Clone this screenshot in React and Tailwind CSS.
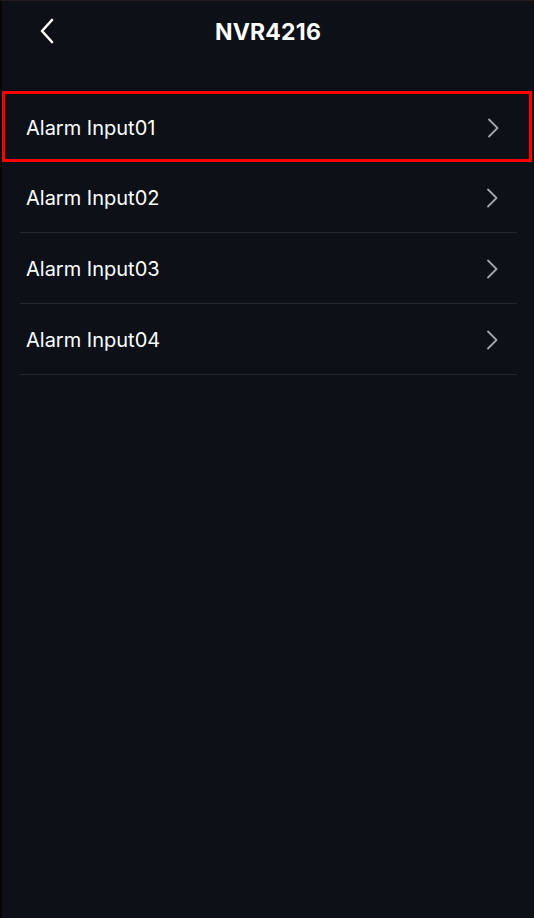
import React from 'react'

const inputs = ['Alarm Input01', 'Alarm Input02', 'Alarm Input03', 'Alarm Input04']

function Chevron() {
  return (
    <svg width="12" height="20" viewBox="0 0 12 20" fill="none" className="mt-[2px] shrink-0">
      <path d="M2 1.5l8.5 8.5-8.5 8.5" stroke="#a3a6ad" strokeWidth="1.8" strokeLinecap="round" strokeLinejoin="round" />
    </svg>
  )
}

function BackIcon() {
  return (
    <svg width="16" height="26" viewBox="0 0 16 26" fill="none">
      <path d="M13 2L3 13l10 11" stroke="#ffffff" strokeWidth="2.6" strokeLinecap="round" strokeLinejoin="round" />
    </svg>
  )
}

export default function App() {
  return (
    <div className="flex h-[918px] w-full border-t border-[#2a171c] bg-[#0d1017] text-white" style={{ fontFamily: 'Inter, "Noto Sans", sans-serif' }}>
      <div className="w-[2px] shrink-0 bg-[#06070a]" />
      <div className="flex flex-1 flex-col">
        <header className="relative flex h-[62px] items-center justify-center">
          <button className="absolute left-[37px] top-[17px]">
            <BackIcon />
          </button>
          <h1 className="text-[23px] font-bold tracking-[0.2px]">NVR4216</h1>
        </header>

        <ul className="mt-[28px]">
          {inputs.map((name, i) =>
            i === 0 ? (
              <li key={name} className="mr-[2px] flex h-[71px] items-center justify-between border-[3px] border-[#f00] pl-[21px] pr-[30px]">
                <span className="mt-[2px] text-[20px]">{name}</span>
                <Chevron />
              </li>
            ) : (
              <li key={name} className="ml-[18px] mr-[17px] flex h-[71px] items-center justify-between border-b border-[#24272e] pl-[6px] pr-[19px]">
                <span className="mt-[2px] text-[20px]">{name}</span>
                <Chevron />
              </li>
            )
          )}
        </ul>
      </div>
    </div>
  )
}
